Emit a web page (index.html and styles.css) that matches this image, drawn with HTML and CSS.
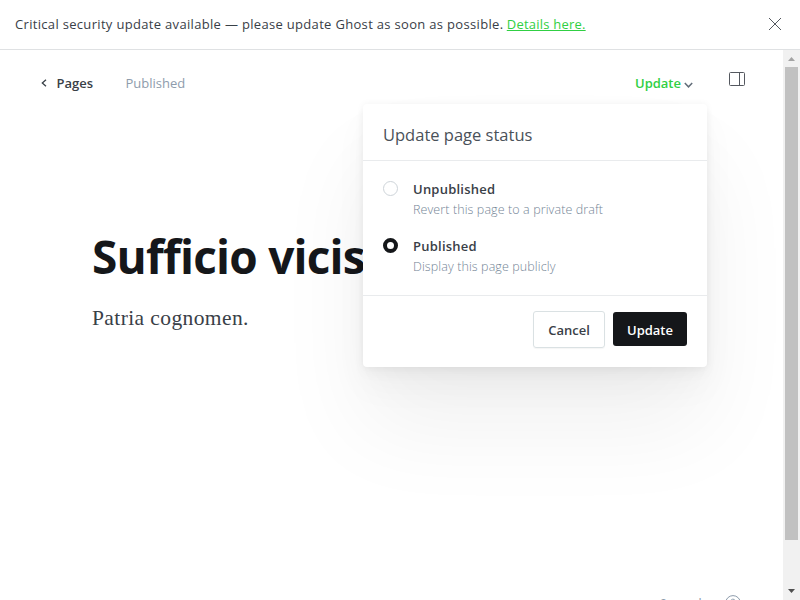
FILE: index.html
```html
<!DOCTYPE html>
<html lang="en">
<head>
<meta charset="utf-8">
<title>Ghost editor</title>
<link rel="stylesheet" href="styles.css">
</head>
<body>
<aside class="alert">
  <p class="alert-text"><span class="alert-message">Critical security update available — please update Ghost as soon as possible.</span> <a class="alert-link" href="#">Details here.</a></p>
  <button class="close" aria-label="Close"><svg width="14" height="14" viewBox="0 0 14 14"><path d="M1 1l12 12M13 1L1 13"/></svg></button>
</aside>
<div class="workspace">
  <main class="editor">
    <header class="toolbar">
      <a class="back" href="#"><svg width="6" height="8" viewBox="0 0 6 8"><path d="M5 .7L1.3 4 5 7.3"/></svg><span class="back-label">Pages</span></a>
      <span class="state">Published</span>
      <div class="publish">
        <a class="publish-trigger" href="#"><span class="publish-label">Update</span><svg width="9" height="6" viewBox="0 0 9 6"><path d="M.8 1l3.7 3.8L8.200 1"/></svg></a>
        <section class="menu">
          <h2 class="menu-title">Update page status</h2>
          <div class="options">
            <div class="option"><span class="radio"></span><div><div class="option-name">Unpublished</div><div class="option-note">Revert this page to a private draft</div></div></div>
            <div class="option"><span class="radio radio-on"></span><div><div class="option-name">Published</div><div class="option-note">Display this page publicly</div></div></div>
          </div>
          <footer class="actions"><button class="btn cancel">Cancel</button><button class="btn confirm">Update</button></footer>
        </section>
      </div>
      <button class="sidebar-toggle" aria-label="Settings"><svg width="16" height="14" viewBox="0 0 16 14"><rect x=".5" y=".5" width="15" height="13" rx="1"/><path d="M10.500 .5v13"/></svg></button>
    </header>
    <article class="post">
      <h1 class="post-title">Sufficio vicis</h1>
      <p class="post-body">Patria cognomen.</p>
    </article>
    <div class="status">
      <span class="words">0 words</span>
      <svg width="16" height="16" viewBox="0 0 16 16"><circle cx="8" cy="8" r="7.400"/><path d="M5.800 6.300a2.200 2.200 0 1 1 3.200 2C8.200 8.700 8 9 8 10M8 11.500v1"/></svg>
    </div>
  </main>
  <div class="scrollbar">
    <svg class="arrow-up" width="7" height="4" viewBox="0 0 7 4"><path d="M0 4L3.500 0 7 4z"/></svg>
    <div class="thumb"></div>
    <svg class="arrow-down" width="7" height="4" viewBox="0 0 7 4"><path d="M0 0h7L3.500 4z"/></svg>
  </div>
</div>
</body>
</html>
```
FILE: styles.css
```css
* { box-sizing: border-box; }
body {
  margin: 0;
  height: 600px;
  overflow: hidden;
  display: flex;
  flex-direction: column;
  background: #fff;
  color: #394047;
  font: 13px/20px "Open Sans", "Noto Sans", sans-serif;
}
a { color: inherit; text-decoration: none; }
button { padding: 0; border: 0; background: none; font: inherit; }
h1, h2, p { margin: 0; }
svg { display: block; flex: none; fill: none; stroke: currentColor; }
.alert {
  flex: none;
  height: 50px;
  padding: 0 18px 2px 15px;
  display: flex;
  align-items: center;
  justify-content: space-between;
  border-bottom: 1px solid #dfe1e3;
  white-space: nowrap;
}
.alert-message { letter-spacing: .32px; }
.alert-link { color: #30cf43; text-decoration: underline; letter-spacing: .22px; }
.close { color: #54585f; }
.workspace { flex: 1; min-height: 0; display: flex; }
.editor { flex: 1; min-width: 0; display: flex; flex-direction: column; overflow: hidden; }
.toolbar { flex: none; height: 66px; padding: 0 38px 0 41px; display: flex; align-items: center; }
.back { display: flex; align-items: center; gap: 9.500px; font-weight: 600; }
.back svg { margin-top: -1px; stroke-width: 1.300; }
.back-label { width: 37px; }
.state { margin-left: 32px; color: #8e9cac; }
.publish { position: relative; margin-left: auto; }
.publish-trigger { display: flex; align-items: center; gap: 3px; color: #30cf43; font-weight: 600; }
.publish-trigger svg { margin-top: 4px; color: #626d79; stroke-width: 1.500; }
.sidebar-toggle { margin: -8px 0 0 36px; color: #54585f; }
.menu {
  position: absolute;
  z-index: 2;
  top: 31px;
  right: -14px;
  width: 344px;
  height: 263px;
  border-radius: 4px;
  background: #fff;
  box-shadow: 0 0 7px rgba(0,0,0,.05), 0 7px 12px rgba(0,0,0,.03), 0 20px 35px rgba(0,0,0,.035), 0 60px 95px rgba(0,0,0,.06);
}
.menu-title { height: 57px; padding: 19px 20px 0; border-bottom: 1px solid #e9ebed; font-size: 16.500px; line-height: 24px; font-weight: 400; color: #4a5159; }
.options { height: 135px; padding: 18px 20px 0; border-bottom: 1px solid #e9ebed; }
.option { display: flex; gap: 15px; height: 57px; }
.radio { flex: none; width: 15px; height: 15px; margin-top: 2px; border: 1px solid #ced4d9; border-radius: 50%; }
.radio-on { border: 4px solid #15171a; }
.option-name { font-weight: 600; letter-spacing: .23px; }
.option-note { color: #748596; font-size: 12.500px; font-weight: 300; line-height: 21px; letter-spacing: .1px; }
.actions { padding: 15px 20px; display: flex; align-items: flex-start; justify-content: flex-end; gap: 8px; }
.btn { border-radius: 3px; font-weight: 600; }
.cancel { width: 72px; height: 37px; border: 1px solid #dae1e3; box-shadow: 0 1px 1px rgba(0,0,0,.04); color: #394047; }
.confirm { width: 74px; height: 34px; margin-top: 1px; padding-top: 2px; background: #15171a; color: #fff; }
.post { padding: 110px 92px 0; }
.post-title { font-size: 46px; line-height: 61px; font-weight: 700; letter-spacing: -.8px; color: #15171a; white-space: nowrap; }
.post-body { margin-top: 18px; font: 21.500px/26px "Liberation Serif", serif; letter-spacing: .4px; }
.status { flex: none; height: 20px; margin-top: auto; margin-bottom: -14px; padding-right: 42px; display: flex; align-items: flex-start; justify-content: flex-end; gap: 17px; color: #8e9cac; }
.status svg { margin-top: 1px; }
.words { margin-top: -1px; }
.scrollbar { flex: none; width: 17px; padding: 7px 0 7px; display: flex; flex-direction: column; align-items: center; background: #f1f1f1; }
.scrollbar svg { stroke: none; }
.arrow-up { fill: #a3a3a3; }
.thumb { width: 13px; height: 473px; margin-top: 6px; background: #c1c1c1; }
.arrow-down { margin-top: auto; fill: #505050; }
```
